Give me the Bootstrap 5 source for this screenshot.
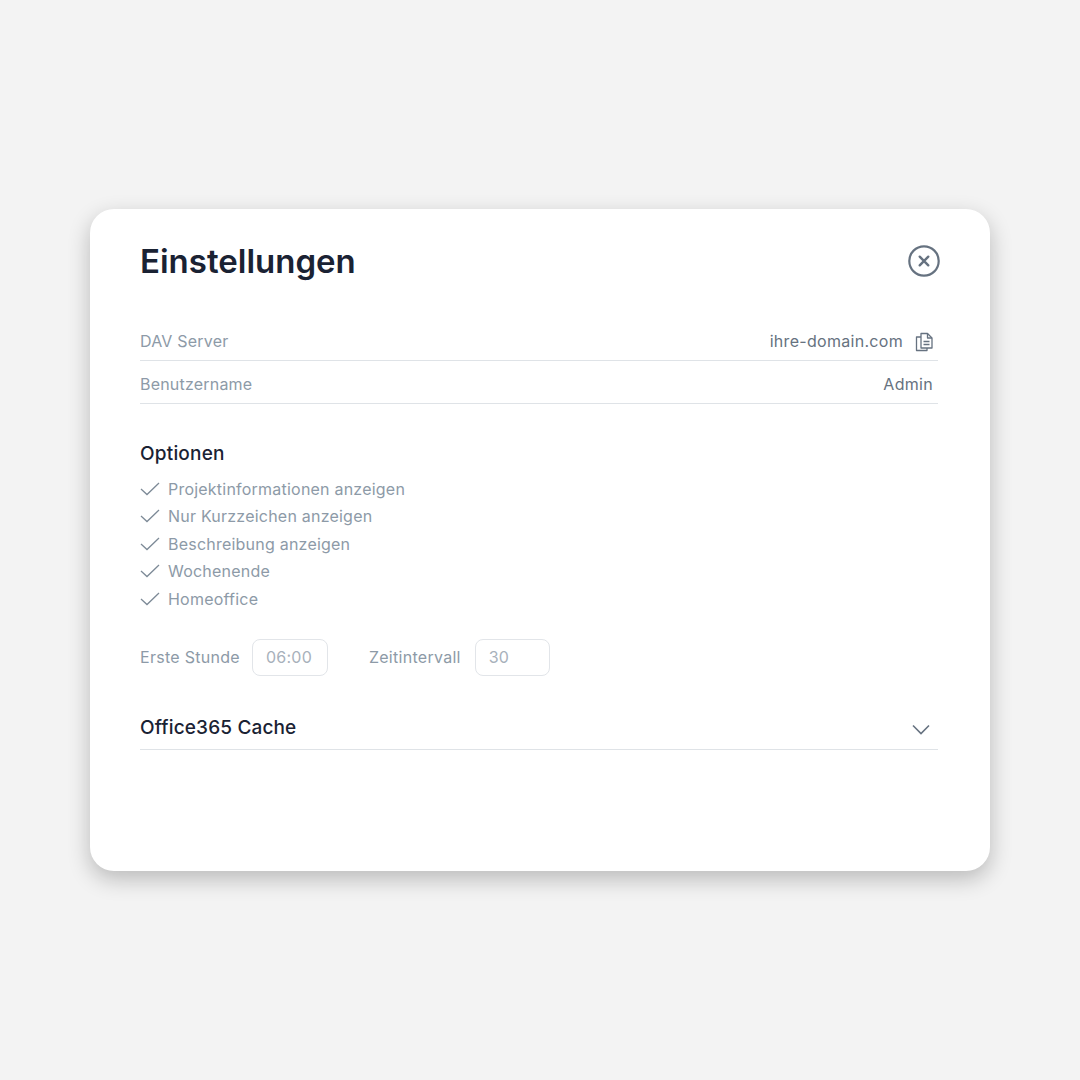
<!DOCTYPE html>
<html lang="de">
<head>
    <meta charset="UTF-8" />
    <title>Einstellungen</title>
    <meta name="viewport" content="width=device-width, initial-scale=1" />
    <link href="https://cdn.jsdelivr.net/npm/bootstrap@5.3.0/dist/css/bootstrap.min.css" rel="stylesheet" />
    <style>
        body {
            background-color: #f3f3f3;
            font-family: 'Inter', sans-serif;
            height: 1080px;
            padding-top: 209px;
        }
        .settings-panel {
            width: 900px;
            height: 662px;
            margin-left: 90px;
            padding: 30px 52px 0 50px;
            background-color: #fff;
            border-radius: 24px;
            box-shadow: 0 8px 22px rgba(0, 0, 0, 0.24);
        }
        .panel-head { height: 44px; margin-bottom: 35px; margin-right: -2px; }
        .panel-title {
            margin: 0;
            font-size: 33px;
            font-weight: 600;
            line-height: 45px;
            color: #1a2233;
        }
        .info-row {
            height: 43px;
            padding-top: 4px;
            padding-right: 5px;
            border-bottom: 1px solid #dfe3e7;
            font-size: 16px;
            letter-spacing: 0.2px;
        }
        .info-label { color: #8d9aa7; }
        .info-value { color: #667280; letter-spacing: 0.3px; }
        .copy-icon { margin-top: 2px; }
        .section-title {
            margin: 36px 0 7px;
            font-size: 19px;
            font-weight: 500;
            line-height: 28px;
            letter-spacing: 0.2px;
            color: #1a2233;
        }
        .option-row {
            height: 27.5px;
            gap: 8px;
            font-size: 16px;
            letter-spacing: 0.22px;
            color: #8d9aa7;
        }
        .time-row { margin-top: 26px; font-size: 16px; letter-spacing: 0.28px; color: #8d9aa7; }
        .time-box {
            width: 76px;
            height: 37px;
            margin: 0 41px 0 12px;
            padding-left: 13px;
            border: 1px solid #e2e5e9;
            border-radius: 8px;
            line-height: 35px;
            color: #a8b1bb;
        }
        .time-box-short { width: 75px; margin-left: 14px; }
        .cache-row {
            height: 55px;
            margin-top: 19px;
            padding-top: 13px;
            padding-right: 7px;
            border-bottom: 1px solid #dfe3e7;
            font-size: 19px;
            font-weight: 500;
            letter-spacing: 0.15px;
            color: #1a2233;
        }
        .cache-chevron { margin-top: 4px; }
    </style>
</head>
<body>

    <div class="settings-panel">
        <div class="panel-head d-flex justify-content-between align-items-center">
            <h1 class="panel-title">Einstellungen</h1>
            <svg width="32" height="32" viewBox="0 0 32 32" fill="none" stroke="#667280" aria-label="Schließen">
                <circle cx="16" cy="16" r="14.7" stroke-width="2.2" />
                <path d="M11.7 11.7l8.6 8.6M20.3 11.7l-8.6 8.6" stroke-width="2.4" stroke-linecap="round" />
            </svg>
        </div>

        <div class="info-row d-flex justify-content-between align-items-center">
            <span class="info-label">DAV Server</span>
            <span class="info-value d-flex align-items-center gap-2">
                ihre-domain.com
                <svg class="copy-icon ms-1" width="18" height="20" viewBox="0 0 18 20" fill="none" stroke="#667280" stroke-width="1.3" stroke-linejoin="round">
                    <path d="M6 1.500h6.500l4.500 4.500v10H6z" />
                    <path d="M12.500 1.500V6H17M8.500 9.500h6M8.500 12.500h6" />
                    <path d="M6 5H1.500v13.500H12V16" />
                </svg>
            </span>
        </div>
        <div class="info-row d-flex justify-content-between align-items-center">
            <span class="info-label">Benutzername</span>
            <span class="info-value">Admin</span>
        </div>

        <h2 class="section-title">Optionen</h2>
        <div id="optionList"></div>

        <div class="time-row d-flex align-items-center">
            <span>Erste Stunde</span>
            <div class="time-box">06:00</div>
            <span>Zeitintervall</span>
            <div class="time-box time-box-short">30</div>
        </div>

        <div class="cache-row d-flex justify-content-between align-items-center">
            <span>Office365 Cache</span>
            <svg class="cache-chevron" width="20" height="12" viewBox="0 0 20 12" fill="none" stroke="#667280" stroke-width="1.6">
                <path d="M2 1.500l8 8 8-8" />
            </svg>
        </div>
    </div>

    <script>
        const optionen = ['Projektinformationen anzeigen', 'Nur Kurzzeichen anzeigen', 'Beschreibung anzeigen', 'Wochenende', 'Homeoffice'];
        const optionList = document.getElementById('optionList');
        optionen.forEach((text) => {
            const row = document.createElement('div');
            row.className = 'option-row d-flex align-items-center';
            row.innerHTML = `<svg width="20" height="14" viewBox="0 0 20 14" fill="none" stroke="#7d8a97" stroke-width="1.3"><path d="M1 7l6 5.500L19 1" /></svg><span>${text}</span>`;
            optionList.appendChild(row);
        });
    </script>

    <script src="https://cdn.jsdelivr.net/npm/bootstrap@5.3.0/dist/js/bootstrap.bundle.min.js"></script>
</body>
</html>
